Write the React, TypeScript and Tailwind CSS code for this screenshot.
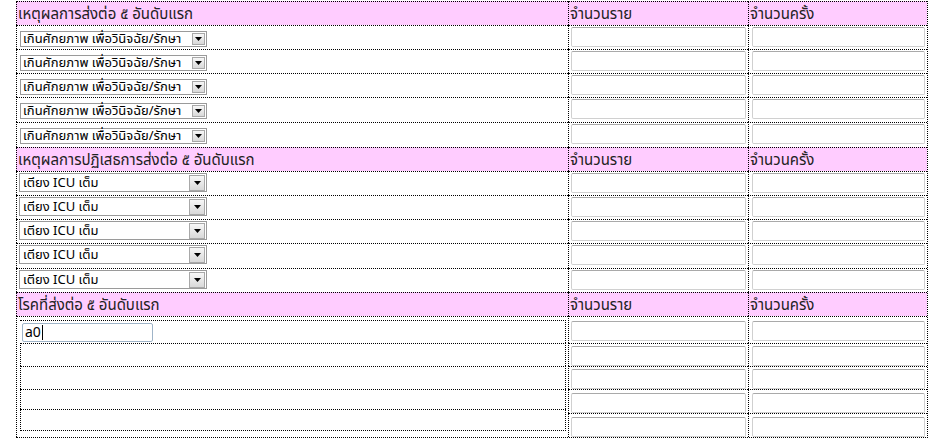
import React from "react";

const cell = "border-l border-t border-dotted border-black";
const font = "font-[Tahoma,'Noto_Sans_Thai','Noto_Sans',sans-serif]";

function Arrow() {
  return (
    <svg width="7" height="4" viewBox="0 0 7 4">
      <path d="M0 0 L7 0 L3.5 4 Z" fill="#000" />
    </svg>
  );
}

function Btn({ small }: { small?: boolean }) {
  return (
    <div
      className={
        (small ? "w-[13px] h-[12px] mr-[1px]" : "w-[16px] h-[16px] mr-[1px]") +
        " flex items-center justify-center border border-[#a8a8a8] bg-gradient-to-b from-[#f7f7f7] to-[#d9d9d9] shrink-0"
      }
    >
      <Arrow />
    </div>
  );
}

function Sel1() {
  return (
    <div className="flex items-center h-[16px] w-[187px] border border-[#9a9a9a] bg-white">
      <span className="flex-1 pl-[2px] text-[13px] leading-[14px] whitespace-nowrap text-black">
        เกินศักยภาพ เพื่อวินิจฉัย/รักษา
      </span>
      <Btn small />
    </div>
  );
}

function Sel2() {
  return (
    <div className="flex items-center h-[19px] w-[188px] border border-[#9a9a9a] bg-white">
      <span className="flex-1 pl-[3px] text-[13px] leading-[16px] whitespace-nowrap text-black">
        เตียง ICU เต็ม
      </span>
      <Btn />
    </div>
  );
}

function TextBox({ w }: { w: string }) {
  return (
    <div
      className={
        w +
        " h-[20px] bg-white border border-[#d0d0d0] border-t-[#a9a9a9] rounded-[2px]"
      }
    />
  );
}

const headCls =
  " h-[24px] bg-[#ffccff] pl-[1px] pt-[3px] text-[15px] leading-[19px] text-[#222] whitespace-nowrap";

function Header({ title }: { title: string }) {
  return (
    <>
      <div className={cell + headCls}>{title}</div>
      <div className={cell + headCls}>จำนวนราย</div>
      <div className={cell + headCls}>จำนวนครั้ง</div>
    </>
  );
}

function Nums({ h, pt }: { h: string; pt: string }) {
  return (
    <>
      <div className={cell + " " + h + " " + pt + " pl-[2px] pr-[2px]"}>
        <TextBox w="w-[175px]" />
      </div>
      <div className={cell + " " + h + " " + pt + " pl-[3px] pr-[2px]"}>
        <TextBox w="w-[173px]" />
      </div>
    </>
  );
}

export default function App() {
  const sec1 = ["h-[24px]", "h-[24px]", "h-[24px]", "h-[25px]", "h-[25px]"];
  const sec2 = ["h-[24px]", "h-[24px]", "h-[24px]", "h-[25px]", "h-[24px]"];
  const sec3 = [
    { h: "h-[27px]", pt: "pt-[4px]" },
    { h: "h-[23px]", pt: "pt-[2px]" },
    { h: "h-[23px]", pt: "pt-[2px]" },
    { h: "h-[24px]", pt: "pt-[3px]" },
    { h: "h-[24px]", pt: "pt-[3px]" },
  ];
  return (
    <div className={"w-[933px] h-[441px] bg-white overflow-hidden " + font}>
      <div className="ml-[16px] mt-[1px] w-[912px] grid grid-cols-[552px_180px_179px] border-r border-b border-dotted border-black">
        <Header title="เหตุผลการส่งต่อ ๕ อันดับแรก" />
        {sec1.map((h, i) => (
          <React.Fragment key={"a" + i}>
            <div className={cell + " " + h + " pl-[3px] pt-[5px]"}>
              <Sel1 />
            </div>
            <Nums h={h} pt="pt-[1px]" />
          </React.Fragment>
        ))}
        <Header title="เหตุผลการปฏิเสธการส่งต่อ ๕ อันดับแรก" />
        {sec2.map((h, i) => (
          <React.Fragment key={"b" + i}>
            <div className={cell + " " + h + " pl-[2px] pt-[1px]"}>
              <Sel2 />
            </div>
            <Nums h={h} pt="pt-[1px]" />
          </React.Fragment>
        ))}
        <Header title="โรคที่ส่งต่อ ๕ อันดับแรก" />
        <div className={cell + " row-span-5 pl-[3px] pr-[2px] pt-[3px]"}>
          <div className="flex flex-col">
            <div className="h-[23px] border-t border-r border-dotted border-black pl-[2px] pt-[2px]">
              <div className="w-[131px] h-[19px] border border-[#9fb4c8] rounded-[2px] bg-white flex items-center pl-[2px] text-[14px] leading-[16px] text-black">
                a0<span className="inline-block w-[1px] h-[15px] bg-black ml-[1px]" />
              </div>
            </div>
            <div className="h-[23px] border-t border-l border-r border-dotted border-black" />
            <div className="h-[23px] border-t border-l border-r border-dotted border-black" />
            <div className="h-[20px] border-t border-l border-r border-dotted border-black" />
            <div className="h-[22px] border-t border-b border-l border-r border-dotted border-black" />
          </div>
        </div>
        {sec3.map((r, i) => (
          <React.Fragment key={"c" + i}>
            <Nums h={r.h} pt={r.pt} />
          </React.Fragment>
        ))}
      </div>
    </div>
  );
}
